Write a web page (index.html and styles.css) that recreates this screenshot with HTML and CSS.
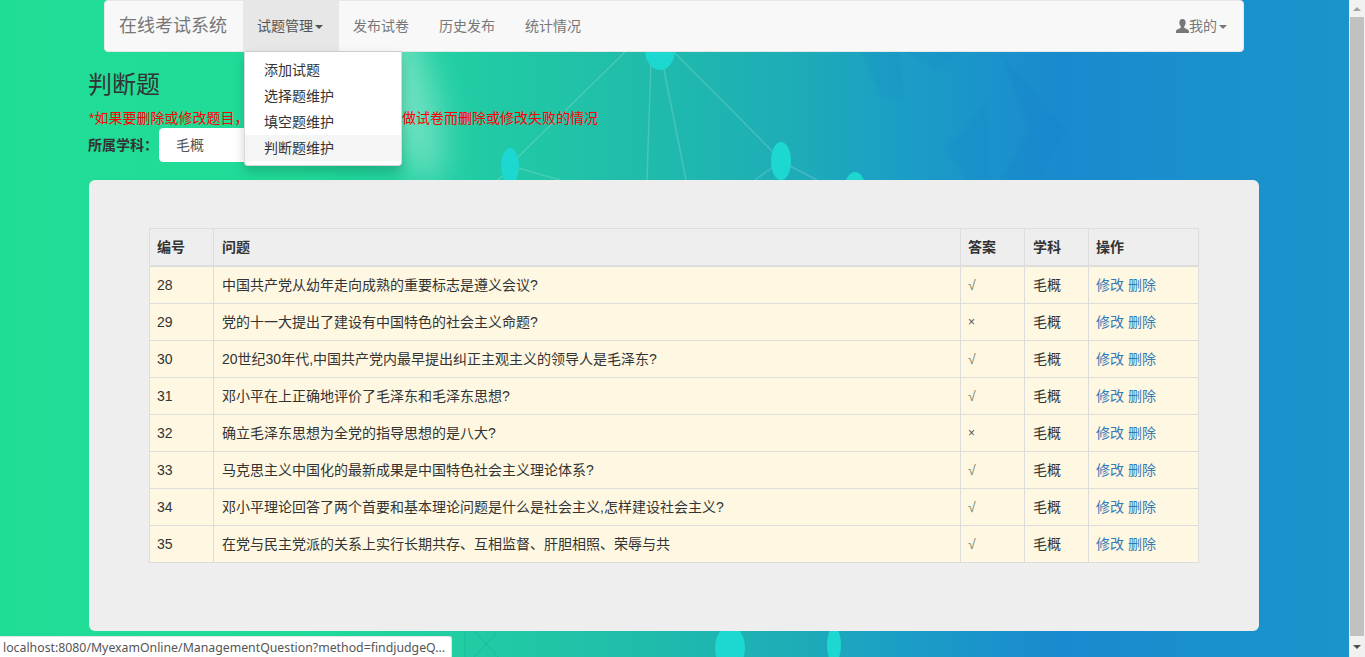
FILE: index.html
```html
<!DOCTYPE html>
<html lang="zh-CN">
<head>
<meta charset="utf-8">
<title>判断题</title>
<link rel="stylesheet" href="styles.css">
</head>
<body>
<div class="viewport">
  <div class="page">
    <svg class="backdrop" width="1349" height="657" viewBox="0 0 1349 657" aria-hidden="true">
      <defs>
        <filter id="soft" x="-80%" y="-50%" width="260%" height="200%"><feGaussianBlur stdDeviation="16"/></filter>
        <filter id="faint" x="-10%" y="-10%" width="120%" height="120%"><feGaussianBlur stdDeviation="1"/></filter>
      </defs>
      <ellipse class="glare" cx="410" cy="100" rx="26" ry="85" transform="rotate(-14 410 100)" filter="url(#soft)"/>
      <g class="facets" filter="url(#faint)">
        <polygon points="905,52 938,71 960,52"/>
        <polygon points="862,52 900,52 905,100 880,96"/>
        <polygon points="946,148 987,103 990,180 966,180"/>
        <polygon points="1000,52 1066,130 1040,180 1000,180 1030,130"/>
      </g>
      <g class="scratches">
        <line x1="465" y1="631" x2="465" y2="657"/>
        <line x1="474" y1="631" x2="498" y2="657"/>
        <line x1="498" y1="631" x2="474" y2="657"/>
      </g>
      <g class="links">
        <line x1="625" y1="52" x2="517" y2="158"/>
        <line x1="651" y1="60" x2="647" y2="180"/>
        <line x1="662" y1="60" x2="686" y2="180"/>
        <line x1="674" y1="52" x2="773" y2="152"/>
        <line x1="518" y1="168" x2="560" y2="180"/>
        <line x1="788" y1="165" x2="817" y2="180"/>
        <line x1="773" y1="167" x2="755" y2="180"/>
        <line x1="505" y1="175" x2="497" y2="180"/>
      </g>
      <g class="nodes">
        <ellipse cx="660" cy="50" rx="15" ry="20"/>
        <ellipse cx="510" cy="166" rx="9" ry="18"/>
        <ellipse cx="781" cy="161" rx="10" ry="19"/>
        <ellipse cx="855" cy="192" rx="11" ry="20"/>
        <ellipse cx="730" cy="648" rx="15" ry="22"/>
        <ellipse cx="834" cy="645" rx="7" ry="18"/>
      </g>
    </svg>
    <div class="shell">
      <div class="nav-wrap">
        <nav class="navbar">
          <a class="brand" href="#">在线考试系统</a>
          <ul class="nav-list">
            <li class="nav-item is-open">
              <a class="nav-link" href="#">试题管理<span class="caret"></span></a>
              <ul class="menu">
                <li><a class="menu-link" href="#">添加试题</a></li>
                <li><a class="menu-link" href="#">选择题维护</a></li>
                <li><a class="menu-link" href="#">填空题维护</a></li>
                <li><a class="menu-link is-hover" href="#">判断题维护</a></li>
              </ul>
            </li>
            <li class="nav-item"><a class="nav-link" href="#">发布试卷</a></li>
            <li class="nav-item"><a class="nav-link" href="#">历史发布</a></li>
            <li class="nav-item"><a class="nav-link" href="#">统计情况</a></li>
          </ul>
          <ul class="nav-list nav-right">
            <li class="nav-item">
              <a class="nav-link" href="#"><svg class="user-icon" width="13" height="14" viewBox="0 0 13 14" aria-hidden="true"><path d="M6.5 0C4.4 0 3.3 1.5 3.3 3.6c0 1.500.6 3 1.500 3.900v1.200C3.800 9.600 0 10.300 0 12.300V14h13v-1.700c0-2-3.800-2.700-4.800-3.600V7.500c.9-.9 1.500-2.400 1.500-3.900C9.700 1.500 8.600 0 6.500 0z"/></svg>我的<span class="caret"></span></a>
            </li>
          </ul>
        </nav>
      </div>
      <h2 class="title">判断题</h2>
      <p class="notice"><span>*如果要删除或修改题目，</span><span>做试卷而删除或修改失败的情况</span></p>
      <div class="subject-row">
        <label class="subject-label" for="subject">所属学科：</label>
        <select class="subject-select" id="subject"><option>毛概</option></select>
      </div>
      <section class="panel">
        <table class="grid">
          <colgroup><col class="c-id"><col><col class="c-ans"><col class="c-sub"><col class="c-op"></colgroup>
          <thead>
            <tr><th>编号</th><th>问题</th><th>答案</th><th>学科</th><th>操作</th></tr>
          </thead>
          <tbody>
            <tr><td>28</td><td>中国共产党从幼年走向成熟的重要标志是遵义会议?</td><td class="ans-yes">√</td><td>毛概</td><td><a href="#">修改</a> <a href="#">删除</a></td></tr>
            <tr><td>29</td><td>党的十一大提出了建设有中国特色的社会主义命题?</td><td class="ans-no">×</td><td>毛概</td><td><a href="#">修改</a> <a href="#">删除</a></td></tr>
            <tr><td>30</td><td>20世纪30年代,中国共产党内最早提出纠正主观主义的领导人是毛泽东?</td><td class="ans-yes">√</td><td>毛概</td><td><a href="#">修改</a> <a href="#">删除</a></td></tr>
            <tr><td>31</td><td>邓小平在上正确地评价了毛泽东和毛泽东思想?</td><td class="ans-yes">√</td><td>毛概</td><td><a href="#">修改</a> <a href="#">删除</a></td></tr>
            <tr><td>32</td><td>确立毛泽东思想为全党的指导思想的是八大?</td><td class="ans-no">×</td><td>毛概</td><td><a href="#">修改</a> <a href="#">删除</a></td></tr>
            <tr><td>33</td><td>马克思主义中国化的最新成果是中国特色社会主义理论体系?</td><td class="ans-yes">√</td><td>毛概</td><td><a href="#">修改</a> <a href="#">删除</a></td></tr>
            <tr><td>34</td><td>邓小平理论回答了两个首要和基本理论问题是什么是社会主义,怎样建设社会主义?</td><td class="ans-yes">√</td><td>毛概</td><td><a href="#">修改</a> <a href="#">删除</a></td></tr>
            <tr><td>35</td><td>在党与民主党派的关系上实行长期共存、互相监督、肝胆相照、荣辱与共</td><td class="ans-yes">√</td><td>毛概</td><td><a href="#">修改</a> <a href="#">删除</a></td></tr>
          </tbody>
        </table>
      </section>
    </div>
  </div>
  <div class="scrollbar" aria-hidden="true">
    <span class="arrow arrow-up"></span>
    <span class="thumb"></span>
    <span class="arrow arrow-down"></span>
  </div>
</div>
<div class="status">localhost:8080/MyexamOnline/ManagementQuestion?method=findjudgeQ...</div>
</body>
</html>
```

FILE: styles.css
```css
* { box-sizing: border-box; }
html, body { margin: 0; height: 657px; overflow: hidden; }
body {
  font-family: "Liberation Sans", "Noto Sans CJK SC", sans-serif;
  font-size: 14px;
  line-height: 20px;
  color: #333;
}
a { text-decoration: none; color: #337ab7; }
ul { list-style: none; margin: 0; padding: 0; }

.viewport { display: flex; height: 657px; }
.page {
  position: relative;
  flex: 1;
  min-width: 0;
  overflow: hidden;
  background: linear-gradient(90deg, #20dd96 0, #20db98 300px, #21cca4 470px, #20bcaa 640px, #1dacb8 800px, #1b9ec6 900px, #1a8acf 1060px, #1a90cd 1200px, #1a94cb 1349px);
}
.backdrop { position: absolute; left: 0; top: 0; }
.glare { fill: rgba(255, 255, 255, .34); }
.facets polygon { fill: rgba(18, 104, 190, .07); }
.scratches line { stroke: rgba(16, 130, 120, .22); stroke-width: 1; }
.links line { stroke: rgba(255, 255, 255, .17); stroke-width: 1.500; }
.nodes ellipse { fill: #1dd8d0; }

.shell { position: relative; width: 1170px; margin-left: 89px; }

.nav-wrap { padding: 0 15px; }
.navbar {
  display: flex;
  height: 52px;
  background: #f8f8f8;
  border: 1px solid #e7e7e7;
  border-radius: 4px;
}
.brand { padding: 15px 16px 15px 14px; font-size: 18px; color: #777; }
.nav-list { display: flex; }
.nav-right { margin-left: auto; }
.nav-item { position: relative; }
.nav-link { display: block; height: 50px; padding: 15px 16px 15px 14px; color: #777; }
.is-open > .nav-link { background: #e7e7e7; color: #555; }
.caret {
  display: inline-block;
  width: 0;
  height: 0;
  margin-left: 2px;
  vertical-align: middle;
  border-top: 4px solid currentColor;
  border-left: 4px solid transparent;
  border-right: 4px solid transparent;
}
.user-icon { vertical-align: -2px; fill: #777; }

.menu {
  position: absolute;
  left: 1px;
  top: 50px;
  z-index: 5;
  width: 158px;
  padding: 5px 0 4px;
  background: #fff;
  border: 1px solid rgba(0, 0, 0, .15);
  border-top-color: #ccc;
  border-radius: 0 0 4px 4px;
  box-shadow: 0 6px 12px rgba(0, 0, 0, .175);
}
.menu-link { display: block; padding: 3px 19px; color: #333; }
.is-hover { background: #f5f5f5; }

.title { margin: 20px 0 10px -1px; font-size: 24px; font-weight: 400; line-height: 26px; }
.notice {
  display: flex;
  justify-content: space-between;
  width: 509px;
  height: 20px;
  margin: 0;
  color: #f00;
  white-space: nowrap;
}
.subject-row { display: flex; align-items: center; height: 34px; margin-left: -1px; }
.subject-label { width: 71px; font-weight: 700; }
.subject-select {
  width: 200px;
  height: 34px;
  padding: 6px 12px;
  font: inherit;
  color: #555;
  background: #fff;
  border: 1px solid #fff;
  border-radius: 4px;
}

.panel {
  margin-top: 18px;
  height: 451px;
  padding: 48px 60px;
  background: #eee;
  border-radius: 6px;
}
.grid { width: 1050px; table-layout: fixed; border-collapse: collapse; }
.c-id, .c-ans, .c-sub { width: 64px; }
.c-op { width: 110px; }
.grid th, .grid td {
  padding: 8px;
  text-align: left;
  border: 1px solid #ddd;
  line-height: 20px;
  white-space: nowrap;
}
.grid th:nth-child(odd), .grid td:nth-child(odd) { padding-left: 7px; }
.grid th { border-bottom-width: 2px; font-weight: 700; }
.grid td { background: #fef7e2; }
.grid .ans-yes { color: #76866a; }
.grid .ans-no { color: #555; font-size: 12px; }

.scrollbar {
  display: flex;
  flex-direction: column;
  align-items: center;
  width: 16px;
  background: #f1f1f1;
}
.thumb { width: 14px; flex: 1; background: #c1c1c1; }
.arrow { height: 17px; width: 16px; display: flex; align-items: center; justify-content: center; }
.arrow::before { content: ""; border-left: 4px solid transparent; border-right: 4px solid transparent; }
.arrow-up::before { border-bottom: 4px solid #a3a3a3; }
.arrow-down { height: 21px; }
.arrow-down::before { border-top: 4px solid #505050; }

.status {
  position: fixed;
  left: 0;
  bottom: 0;
  width: 452px;
  height: 21px;
  padding: 0 3px;
  font-family: "Noto Sans", "Liberation Sans", sans-serif;
  font-size: 12.3px;
  line-height: 21px;
  color: #555;
  white-space: nowrap;
  background: #fff;
  border-top: 1px solid #e4e4e4;
  border-right: 1px solid #e4e4e4;
  border-top-right-radius: 3px;
}
```
